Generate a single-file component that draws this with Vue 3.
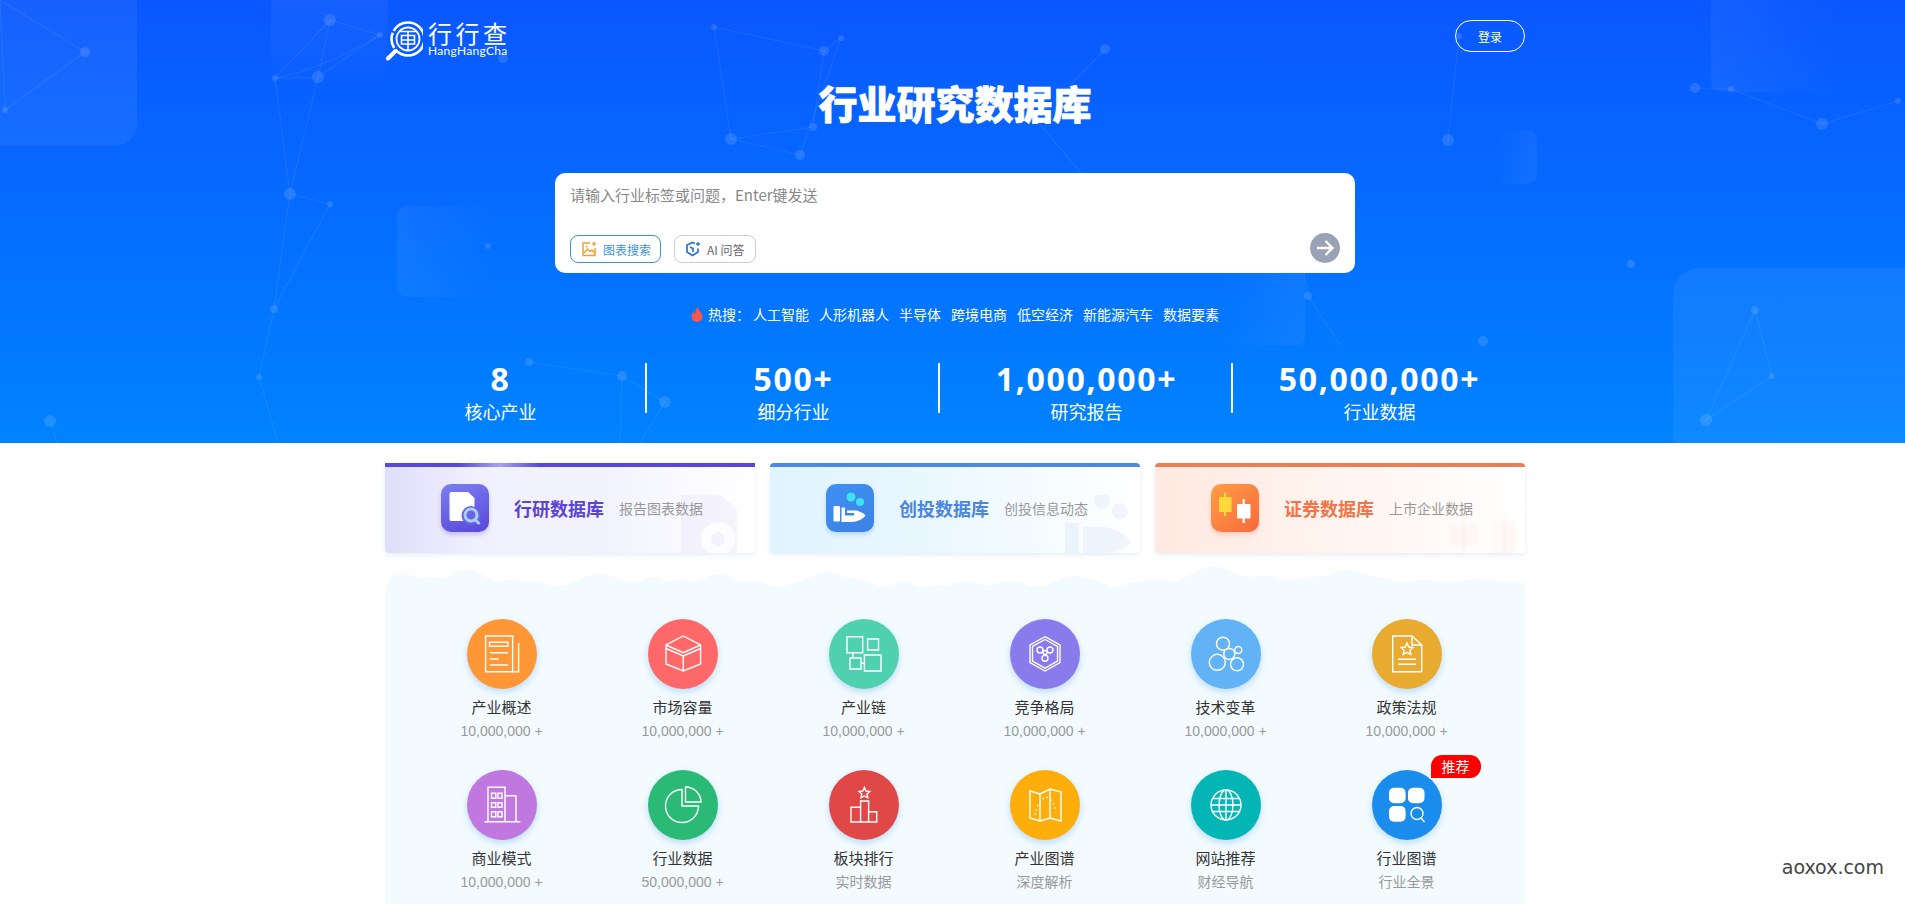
<script setup>
// top of the page: hot searches and the four big numbers
const hot = ['人工智能', '人形机器人', '半导体', '跨境电商', '低空经济', '新能源汽车', '数据要素']
const stats = [
  { num: '8', label: '核心产业' },
  { num: '500+', label: '细分行业' },
  { num: '1,000,000+', label: '研究报告' },
  { num: '50,000,000+', label: '行业数据' }
]

// background network of the hero
const nodes = [
  [85, 52, 5], [5, 110, 3], [330, 20, 6], [380, 35, 3], [275, 78, 3], [318, 77, 6], [290, 194, 6], [330, 204, 3],
  [274, 309, 4], [259, 377, 3], [50, 421, 6], [488, 246, 3], [503, 58, 5], [714, 27, 3], [824, 51, 5], [841, 38, 3],
  [813, 127, 4], [731, 139, 6], [800, 155, 5], [1105, 49, 5], [1308, 296, 4], [1459, 36, 3], [1448, 140, 6],
  [1695, 88, 5], [1731, 89, 3], [1822, 124, 6], [1898, 101, 3], [1631, 264, 4], [1483, 341, 5], [1755, 310, 4],
  [1772, 376, 3], [1706, 420, 6], [529, 362, 4], [622, 376, 5], [665, 402, 6]
]
const lines = [
  'M0 0L85 52L5 110L0 0', 'M330 20L380 35L318 77L275 78L330 20L318 77L290 194L275 78', 'M275 78Q320 70 380 35',
  'M290 194L330 204L274 309L290 194', 'M274 309L259 377L278 443', 'M50 421L57 443',
  'M714 27L824 51L841 38L800 155L731 139L714 27', 'M731 139L813 127L824 51', 'M1105 49L1036 120L1130 230',
  'M1303 268L1308 296L1340 345', 'M1459 36L1448 140', 'M1695 88L1731 89L1822 124L1898 101',
  'M1755 310L1772 376L1706 420L1755 310', 'M529 362L622 376L665 402L640 443', 'M622 376L620 443'
]

// outline of the cloud edge on top of the grey panel
const cloud = [
  [0, 27], [4, 10], [16, 6], [33, 13], [44, 11], [60, 14], [73, 5], [91, 5], [109, 18], [127, 14], [142, 17], [156, 16],
  [169, 23], [193, 16], [207, 8], [229, 11], [247, 20], [269, 10], [282, 17], [298, 14], [313, 18], [324, 10], [342, 8],
  [356, 18], [371, 14], [385, 21], [396, 22], [418, 16], [436, 7], [451, 7], [458, 12], [480, 15], [495, 23], [520, 15],
  [535, 23], [549, 19], [564, 21], [582, 14], [600, 22], [625, 14], [651, 23], [669, 17], [687, 10], [705, 12], [720, 19],
  [731, 23], [742, 17], [753, 18], [771, 13], [789, 18], [804, 10], [822, 1], [836, 2], [851, 8], [865, 13], [886, 9],
  [902, 18], [920, 11], [942, 12], [953, 5], [971, 5], [989, 12], [1004, 13], [1018, 19], [1033, 15], [1047, 14],
  [1062, 19], [1087, 13], [1105, 15], [1124, 17], [1140, 18]
]
function cloudPath() {
  let d = 'M0 30L' + cloud[0].join(' ')
  for (let i = 1; i < cloud.length - 1; i++) {
    const midX = (cloud[i][0] + cloud[i + 1][0]) / 2
    const midY = (cloud[i][1] + cloud[i + 1][1]) / 2
    d += `Q${cloud[i][0]} ${cloud[i][1]} ${midX} ${midY}`
  }
  return d + 'L1140 18V30Z'
}

const cards = [
  { key: 'report', title: '行研数据库', sub: '报告图表数据' },
  { key: 'invest', title: '创投数据库', sub: '创投信息动态' },
  { key: 'stock', title: '证券数据库', sub: '上市企业数据' }
]

const icons = {
  book: '<path d="M18.6 17H45.6V52.7H18.6Z"/><path d="M51.6 24V52.7H45.6"/><path d="M22.5 23.3H41V27.3H22.5Z"/><path d="M22.8 33.7H41M22.8 40H31.6M22.8 46H41"/>',
  cube: '<path d="M35.3 17L52.6 26V45L35.3 52L18 45V26Z"/><path d="M18 26L35.3 33.7L52.6 26M18 29.5L35.3 37L52.6 29.5M35.3 37V52"/>',
  chain: '<path d="M18 17.7H33.7V33.7H18ZM38.6 20H49.5V31H38.6ZM21 39H32V50H21ZM35.4 36H52V52H35.4Z"/><path d="M24 33.7V39M32 44.3H35.4"/>',
  hex: '<path d="M35 17.7L50 26V43.7L35 52L20 43.7V26Z"/><path d="M35 20.5L47.5 27.5V42.2L35 49.2L22.5 42.2V27.5Z"/><circle cx="30" cy="31" r="3"/><circle cx="40" cy="31" r="3"/><circle cx="35" cy="39.3" r="3"/><circle cx="35" cy="33.5" r="2"/>',
  bubble: '<circle cx="32" cy="24.7" r="6.5"/><circle cx="47.3" cy="31" r="3.5"/><circle cx="38.3" cy="35" r="5.5"/><circle cx="26.3" cy="43.3" r="8"/><circle cx="46" cy="45.3" r="6.5"/>',
  policy: '<path d="M20.7 17H40L49.7 26V52.7H20.7Z"/><path d="M40 17V26H49.7"/><path d="M35 24L36.8 28L41 28.5L37.9 31.3L38.8 35.5L35 33.4L31.2 35.5L32.1 31.3L29 28.5L33.2 28Z"/><path d="M26 40.3H44M26 45.3H44"/>',
  building: '<path d="M17.5 51.7H53.3M21 51.7V17.3H38V51.7M38 25.7H49V51.7"/><path d="M24.5 23.3H28.8V28.3H24.5ZM31 23.3H35V28.3H31ZM24.5 32.7H28.8V37.3H24.5ZM31 32.7H35V37.3H31ZM24.5 41.7H28.8V46.7H24.5ZM31 41.7H35V46.7H31Z"/>',
  pie: '<path d="M34 19.5V36H50.5A16.5 16.5 0 1 1 34 19.5Z"/><path d="M37.5 17A15.5 15.5 0 0 1 53 32H37.5Z"/>',
  rank: '<path d="M22 52V37.3H31.6V52ZM31.6 52V31H39.6V52ZM39.6 52V41.7H47.7V52Z"/><path d="M35.4 17.5L37 21L40.8 21.5L38 24L38.8 27.8L35.4 26L32 27.8L32.8 24L30 21.5L33.8 21Z"/>',
  map: '<path d="M20 21L30 24L40 19L51 22V51L40 48L30 51L20 48Z"/><path d="M30 24V51M40 19V48"/><path d="M25 45Q28 30 36 27Q44 30 46 42" stroke-dasharray="1.5 3"/>',
  globe: '<circle cx="35" cy="35" r="15"/><ellipse cx="35" cy="35" rx="7" ry="15"/><path d="M35 20V50M21.5 28.5H48.5M20 35H50M21.5 41.5H48.5"/>',
  apps: '<g fill="#fff" stroke="none"><rect x="17" y="17.7" width="16.6" height="15.6" rx="5"/><rect x="36" y="17.7" width="16.5" height="15.6" rx="5"/><rect x="17" y="36" width="16.6" height="15.7" rx="5"/></g><circle cx="45" cy="43.5" r="6"/><path d="M49 48L52.5 52"/>'
}

const items = [
  { name: '产业概述', count: '10,000,000 +', color: '#ff9737', icon: icons.book },
  { name: '市场容量', count: '10,000,000 +', color: '#ff6868', icon: icons.cube },
  { name: '产业链', count: '10,000,000 +', color: '#4fd1b0', icon: icons.chain },
  { name: '竞争格局', count: '10,000,000 +', color: '#8a7bec', icon: icons.hex },
  { name: '技术变革', count: '10,000,000 +', color: '#62b2f6', icon: icons.bubble },
  { name: '政策法规', count: '10,000,000 +', color: '#e8ab30', icon: icons.policy },
  { name: '商业模式', count: '10,000,000 +', color: '#c078e0', icon: icons.building },
  { name: '行业数据', count: '50,000,000 +', color: '#2bba75', icon: icons.pie },
  { name: '板块排行', count: '实时数据', color: '#e04848', icon: icons.rank },
  { name: '产业图谱', count: '深度解析', color: '#fdae0a', icon: icons.map },
  { name: '网站推荐', count: '财经导航', color: '#04b5b5', icon: icons.globe },
  { name: '行业图谱', count: '行业全景', color: '#1a8cec', icon: icons.apps, badge: '推荐' }
]
</script>

<template>
  <div class="page">
    <section class="hero">
      <svg class="hero-bg" viewBox="0 0 1905 443" width="1905" height="443">
        <defs>
          <linearGradient id="fadeRight" x1="0" x2="1" y1="0" y2="0">
            <stop offset="0" stop-color="#fff" stop-opacity=".05" />
            <stop offset="1" stop-color="#fff" stop-opacity="0" />
          </linearGradient>
          <linearGradient id="fadeLeft" x1="0" x2="1" y1="0" y2="0">
            <stop offset="0" stop-color="#fff" stop-opacity="0" />
            <stop offset="1" stop-color="#fff" stop-opacity=".05" />
          </linearGradient>
          <linearGradient id="fadeDown" x1="0" x2="0" y1="0" y2="1">
            <stop offset="0" stop-color="#fff" stop-opacity=".07" />
            <stop offset="1" stop-color="#fff" stop-opacity="0" />
          </linearGradient>
        </defs>
        <rect x="-30" y="-30" width="167" height="176" rx="22" fill="#fff" fill-opacity=".06" />
        <rect x="271" y="-30" width="117" height="120" fill="url(#fadeDown)" />
        <rect x="397" y="206" width="100" height="91" rx="10" fill="url(#fadeRight)" />
        <rect x="1220" y="270" width="85" height="75" rx="8" fill="url(#fadeLeft)" />
        <rect x="1495" y="130" width="42" height="54" rx="10" fill="url(#fadeLeft)" />
        <rect x="1711" y="-20" width="130" height="112" rx="10" fill="url(#fadeRight)" />
        <rect x="1673" y="268" width="260" height="200" rx="26" fill="#fff" fill-opacity=".06" />
        <g fill="none" stroke="#fff" stroke-opacity=".07" stroke-width="1.2">
          <path v-for="d in lines" :key="d" :d="d" />
        </g>
        <g fill="#fff" fill-opacity=".12">
          <circle v-for="n in nodes" :key="n[0] + '-' + n[1]" :cx="n[0]" :cy="n[1]" :r="n[2]" />
        </g>
      </svg>

      <div class="hero-inner">
        <header class="top">
          <div class="logo">
            <svg class="logo-mark" viewBox="0 0 38 42" width="38" height="42" fill="none" stroke="#fff">
              <circle cx="23" cy="20" r="16.5" stroke-width="2.6" stroke-dasharray="40 2 16 2 43" />
              <circle cx="23" cy="20" r="11.5" stroke-width="1.8" />
              <path d="M15 12.5H31M16.5 16.5H29.5V25H16.5ZM23 12.5V31.5M16.5 21H29.5" stroke-width="1.6" />
              <path d="M3 39.5L10.5 32" stroke-width="4" stroke-linecap="round" />
            </svg>
            <div class="logo-text">
              <div class="logo-cn">行行查</div>
              <div class="logo-en">HangHangCha</div>
            </div>
          </div>
          <button class="login">登录</button>
        </header>

        <h1 class="title">行业研究数据库</h1>

        <div class="search">
          <input class="search-input" type="text" placeholder="请输入行业标签或问题，Enter键发送" />
          <div class="search-bar">
            <button class="tag tag-on">
              <svg viewBox="0 0 16 16" width="16" height="16" fill="none" stroke="#f5a02d" stroke-width="1.5">
                <path d="M9 2H2V14.5H14V7" />
                <path d="M3 12L6.5 8L9 10.5L11 9L13.5 12" />
                <circle cx="5.5" cy="5.5" r="1" fill="#f5a02d" stroke="none" />
                <path d="M13 0.5V5M10.8 2.8H15.2" stroke-width="1.3" />
              </svg>
              图表搜索
            </button>
            <button class="tag">
              <svg viewBox="0 0 16 16" width="16" height="16" fill="none" stroke="#2a6fd6" stroke-width="1.7">
                <path d="M10 2.5L7.5 1.5L2 4V11L7.5 14.5L13 11V7.5" />
                <path d="M5 6L8 7.5V11" />
                <path d="M13 1V5M11 3H15" stroke-width="1.3" />
              </svg>
              AI 问答
            </button>
            <button class="send">
              <svg viewBox="0 0 30 30" width="30" height="30" fill="none" stroke="#fff" stroke-width="2.4">
                <path d="M7 15H22M15.5 8L22.5 15L15.5 22" />
              </svg>
            </button>
          </div>
        </div>

        <div class="hot">
          <svg class="flame" viewBox="0 0 12 15" width="12" height="15"><path fill="#f5584f" d="M6.5 0C7 3 11.5 5.5 11.5 9.5C11.5 12.8 9 15 6 15C3 15 .5 12.8 .5 9.8C.5 7.5 1.8 6 2.8 4.8C3 6 3.5 6.8 4.3 7.2C4 4.5 4.8 2 6.5 0Z" /></svg>
          <span class="hot-label">热搜：</span>
          <a v-for="h in hot" :key="h" class="hot-item">{{ h }}</a>
        </div>

        <div class="stats">
          <div v-for="s in stats" :key="s.label" class="stat">
            <div class="stat-num">{{ s.num }}</div>
            <div class="stat-label">{{ s.label }}</div>
          </div>
        </div>
      </div>
    </section>

    <main class="main">
      <div class="cards">
        <div v-for="c in cards" :key="c.key" class="card" :class="'card-' + c.key">
          <svg v-if="c.key === 'report'" class="card-mark" viewBox="0 0 56 58" width="56" height="58">
            <path d="M0 0H40L56 14V58H0Z" fill="#5a46d8" fill-opacity=".05" />
            <circle cx="37" cy="44" r="17" fill="#fff" fill-opacity=".8" />
            <circle cx="37" cy="44" r="7" fill="#5a46d8" fill-opacity=".06" />
          </svg>
          <svg v-else-if="c.key === 'invest'" class="card-mark" viewBox="0 0 66 58" width="66" height="58">
            <g fill="#4a86e0" fill-opacity=".07">
              <circle cx="37" cy="6" r="8" />
              <circle cx="55" cy="16" r="8" />
              <rect x="0" y="28" width="14" height="30" />
              <path d="M18 32H40C55 35 64 42 66 48C60 54 50 58 40 58H18Z" />
            </g>
          </svg>
          <svg v-else class="card-mark" viewBox="0 0 70 38" width="70" height="38">
            <g fill="#f0764a" fill-opacity=".04">
              <rect x="0" y="10" width="28" height="20" />
              <rect x="12" y="0" width="3" height="38" />
              <rect x="42" y="6" width="24" height="32" />
              <rect x="53" y="-8" width="3" height="46" />
            </g>
          </svg>

          <div class="card-icon">
            <svg v-if="c.key === 'report'" viewBox="0 0 48 48" width="48" height="48">
              <path d="M10.5 8H27L33.5 14V37H10.5C9 37 8.5 36.2 8.5 35V10C8.5 8.8 9 8 10.5 8Z" fill="#fff" />
              <circle cx="30" cy="31.5" r="9.5" fill="#6a63e6" />
              <circle cx="30" cy="31" r="6" fill="none" stroke="#a9d0f6" stroke-width="3" />
              <path d="M34 35.5L38.5 40" stroke="#a9d0f6" stroke-width="3" />
            </svg>
            <svg v-else-if="c.key === 'invest'" viewBox="0 0 48 48" width="48" height="48">
              <circle cx="25" cy="13" r="4.5" fill="#3fe0f0" />
              <circle cx="34" cy="18" r="4" fill="#3fe0f0" />
              <rect x="7.5" y="22" width="6.5" height="15.5" rx="1" fill="#fff" />
              <path d="M15.5 23.5H19V31.5H27.5C28.5 31.5 28.5 29 27.5 29H21V26.5H31C35 28 38 29.5 39.5 31.5C37 35 32 38 25 38H15.5Z" fill="#fff" />
            </svg>
            <svg v-else viewBox="0 0 48 48" width="48" height="48">
              <path d="M14 8.5V32" stroke="#ffd83a" stroke-width="2.2" />
              <rect x="8" y="13" width="12.5" height="15" fill="#ffd83a" />
              <path d="M32.7 15V39" stroke="#fff" stroke-width="2.2" />
              <rect x="26" y="20" width="13.5" height="14.5" rx="1" fill="#fff" />
            </svg>
          </div>
          <span class="card-title">{{ c.title }}</span>
          <span class="card-sub">{{ c.sub }}</span>
        </div>
      </div>

      <div class="panel">
        <svg class="wave" viewBox="0 0 1140 30" width="1140" height="30">
          <path fill="#f3fbff" :d="cloudPath()" />
        </svg>
        <div class="grid">
          <div v-for="it in items" :key="it.name" class="item">
            <div class="circle" :style="{ background: it.color }">
              <svg viewBox="0 0 70 70" width="70" height="70" fill="none" stroke="#fff" stroke-width="1.4" v-html="it.icon"></svg>
              <span v-if="it.badge" class="badge">{{ it.badge }}</span>
            </div>
            <div class="item-name">{{ it.name }}</div>
            <div class="item-count">{{ it.count }}</div>
          </div>
        </div>
      </div>
    </main>

    <div class="watermark">aoxox.com</div>
  </div>
</template>

<style>
html, body {
  margin: 0;
  background: #fff;
}
</style>

<style scoped>
.page {
  position: relative;
  display: flex;
  flex-direction: column;
  height: 100vh;
  overflow: hidden;
  font-family: "Noto Sans CJK SC", "Noto Sans", sans-serif;
}

.hero {
  position: relative;
  flex: none;
  height: 443px;
  overflow: hidden;
  background: linear-gradient(180deg, #0a57ff 0%, #0083ff 100%);
}

.hero-bg {
  position: absolute;
  left: 0;
  top: 0;
}

.hero-inner {
  position: relative;
  width: 1140px;
  margin-left: 385px;
  color: #fff;
}

.top {
  display: flex;
  justify-content: space-between;
  align-items: flex-start;
  padding-top: 18px;
  height: 40px;
}

.logo {
  display: flex;
  gap: 5px;
}

.logo-mark {
  margin-top: 1px;
}

.logo-text {
  padding-top: 3px;
}

.logo-cn {
  font-size: 24px;
  line-height: 24px;
  letter-spacing: 3.5px;
}

.logo-en {
  font-family: "Lato", sans-serif;
  font-size: 12px;
  line-height: 12px;
  letter-spacing: 0.3px;
}

.login {
  width: 70px;
  height: 32px;
  margin-top: 2px;
  padding: 0;
  border: 1px solid #fff;
  border-radius: 16px;
  background: transparent;
  color: #fff;
  font-family: inherit;
  font-size: 12px;
}

.title {
  margin: 19px 0 0;
  text-align: center;
  font-size: 39px;
  line-height: 50px;
  font-weight: 900;
  -webkit-text-stroke: 0.7px #fff;
}

.search {
  box-sizing: border-box;
  width: 800px;
  height: 100px;
  margin: 46px 0 0 170px;
  padding: 9px 15px 10px;
  border-radius: 10px;
  background: #fff;
}

.search-input {
  display: block;
  box-sizing: border-box;
  width: 100%;
  height: 24px;
  padding: 0;
  border: 0;
  outline: 0;
  font-family: inherit;
  font-size: 15px;
  color: #333;
}

.search-input::placeholder {
  color: #888;
}

.search-bar {
  display: flex;
  align-items: flex-end;
  gap: 13px;
  margin-top: 27px;
}

.tag {
  display: flex;
  align-items: center;
  gap: 6px;
  height: 28px;
  padding: 0 10px;
  border: 1px solid #ccc;
  border-radius: 8px;
  background: #fff;
  color: #666;
  font-family: inherit;
  font-size: 12px;
}

.tag-on {
  border-color: #3d93dd;
  color: #3d93dd;
  padding-right: 9px;
}

.send {
  width: 30px;
  height: 30px;
  margin-left: auto;
  padding: 0;
  border: 0;
  border-radius: 50%;
  background: #9aa3b5;
}

.send svg {
  display: block;
}

.hot {
  display: flex;
  justify-content: center;
  align-items: center;
  margin-top: 31px;
  height: 20px;
  font-size: 14px;
  gap: 10px;
}

.flame {
  margin-right: -5px;
}

.hot-label {
  width: 35px;
  white-space: nowrap;
}

.stats {
  display: grid;
  grid-template-columns: repeat(4, 293px);
  margin: 38px 0 0 -31px;
}

.stat {
  position: relative;
  text-align: center;
}

.stat:not(:last-child)::after {
  content: "";
  position: absolute;
  right: 0;
  top: 1px;
  width: 2px;
  height: 50px;
  background: #fff;
}

.stat-num {
  font-family: "Noto Sans", sans-serif;
  font-size: 32px;
  font-weight: 700;
  line-height: 33px;
  letter-spacing: 1.7px;
}

.stat-label {
  margin-top: 2px;
  font-size: 18px;
  line-height: 28px;
}

.main {
  display: flex;
  flex: 1;
  flex-direction: column;
  width: 1140px;
  margin-left: 385px;
}

.cards {
  display: grid;
  grid-template-columns: repeat(3, 370px);
  gap: 15px;
  margin-top: 20px;
}

.card {
  position: relative;
  box-sizing: border-box;
  display: flex;
  align-items: center;
  height: 90px;
  padding: 0 0 4px 56px;
  border-top: 4px solid;
  border-radius: 4px;
  overflow: hidden;
  box-shadow: 0 2px 5px rgba(120, 150, 200, 0.18);
}

.card-report {
  border-image: linear-gradient(90deg, #5a46d8 0%, #5a46d8 20%, #a9a2ec 31%, #5a46d8 42%, #5a46d8 100%) 1;
  background: linear-gradient(90deg, #dfdefb 0%, #f1f0fe 25%, #f3f3fe 60%, #fff 100%);
}

.card-invest {
  border-top-color: #4b8ae0;
  background: linear-gradient(90deg, #dff4ff 0%, #e9f7ff 40%, #fff 100%);
}

.card-stock {
  border-top-color: #e87f55;
  background: linear-gradient(90deg, #ffe9e0 0%, #fff2ed 40%, #fff 100%);
}

.card-mark {
  position: absolute;
  right: 18px;
  bottom: 0;
}

.card-invest .card-mark {
  right: 9px;
}

.card-stock .card-mark {
  right: 5px;
}

.card-icon {
  position: relative;
  width: 48px;
  height: 48px;
  margin-right: 25px;
  border-radius: 10px;
}

.card-icon svg {
  display: block;
}

.card-report .card-icon {
  background: linear-gradient(160deg, #7d7ef0, #5847dc);
  box-shadow: 0 3px 4px rgba(90, 70, 216, 0.25);
}

.card-invest .card-icon {
  background: linear-gradient(160deg, #3f8ff2, #3c82e6);
  box-shadow: 0 3px 4px rgba(75, 138, 224, 0.25);
}

.card-stock .card-icon {
  background: linear-gradient(135deg, #ff9d45, #f76a3e);
  box-shadow: 0 3px 4px rgba(240, 118, 74, 0.25);
}

.card-title {
  position: relative;
  font-size: 18px;
  font-weight: 700;
}

.card-report .card-title {
  color: #5b43d6;
}

.card-invest .card-title {
  color: #4a86e0;
}

.card-stock .card-title {
  color: #f0764a;
}

.card-sub {
  position: relative;
  margin-left: 15px;
  font-size: 14px;
  color: #999;
}

.panel {
  flex: 1;
  margin-top: 12px;
  display: flex;
  flex-direction: column;
}

.wave {
  display: block;
  flex: none;
}

.grid {
  flex: 1;
  display: grid;
  grid-template-columns: repeat(6, 181px);
  grid-auto-rows: 151px;
  padding: 24px 26px 0;
  background: #f3fbff;
}

.item {
  display: flex;
  flex-direction: column;
  align-items: center;
}

.circle {
  position: relative;
  width: 70px;
  height: 70px;
  border-radius: 50%;
  box-shadow: 0 3px 7px rgba(90, 160, 230, 0.35);
}

.circle svg {
  display: block;
}

.badge {
  position: absolute;
  left: 59px;
  top: -15px;
  width: 50px;
  height: 23px;
  border-radius: 11px 11px 11px 0;
  background: #f00;
  color: #fff;
  font-size: 14px;
  line-height: 23px;
  text-align: center;
}

.item-name {
  margin-top: 7px;
  font-size: 15px;
  line-height: 22px;
  color: #333;
}

.item-count {
  margin-top: 2px;
  font-family: "Liberation Sans", "Noto Sans CJK SC", sans-serif;
  font-size: 14px;
  line-height: 22px;
  color: #999;
}

.watermark {
  position: absolute;
  right: 21px;
  bottom: 24px;
  font-family: "DejaVu Sans", sans-serif;
  font-size: 19px;
  line-height: 26px;
  color: #444;
}
</style>
